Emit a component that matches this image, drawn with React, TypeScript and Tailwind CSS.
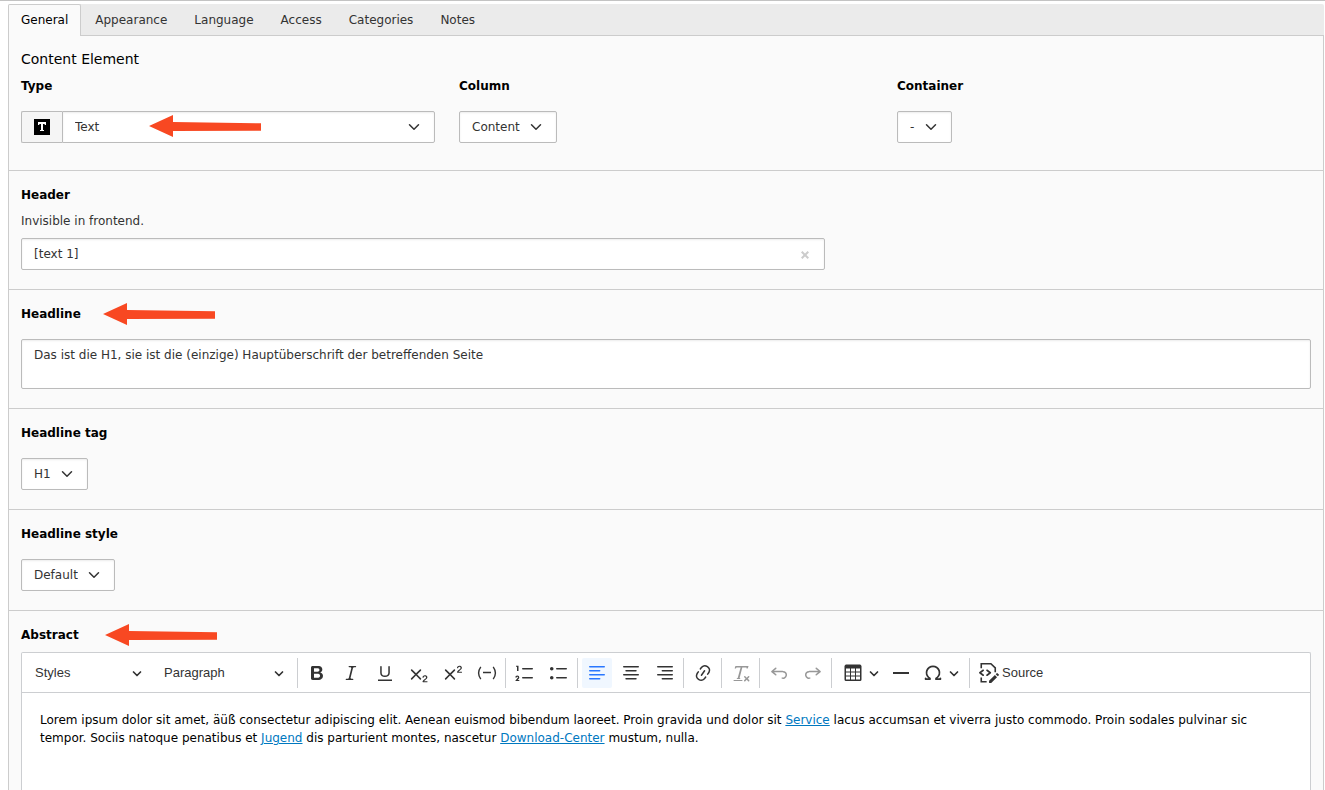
import { useState } from "react";
import type { ReactNode } from "react";
import clsx from "clsx";

const TABS = [
  "General",
  "Appearance",
  "Language",
  "Access",
  "Categories",
  "Notes",
];

const CROSS_PATH =
  "m7.03 10.349 3.818-3.819a.8.8 0 1 1 1.132 1.132L8.16 11.48l3.819 3.818a.8.8 0 1 1-1.132 1.132L7.03 12.61l-3.818 3.82a.8.8 0 1 1-1.132-1.132L5.9 11.48 2.08 7.662A.8.8 0 1 1 3.212 6.53l3.818 3.82z";

const SMALL_TWO_PATH =
  "h2.549c.254 0 .447.05.58.152a.49.49 0 0 1 .201.413.54.54 0 0 1-.159.393c-.105.108-.266.162-.48.162h-3.594c-.245 0-.435-.066-.572-.197a.621.621 0 0 1-.205-.463c0-.114.044-.265.132-.453a1.62 1.62 0 0 1 .288-.444c.433-.436.824-.81 1.172-1.122.348-.312.597-.517.747-.615.267-.183.49-.368.667-.553.177-.185.312-.375.405-.57.093-.194.139-.384.139-.57a1.008 1.008 0 0 0-.554-.917 1.197 1.197 0 0 0-.56-.133c-.426 0-.761.182-1.005.546a2.332 2.332 0 0 0-.164.39 1.609 1.609 0 0 1-.258.488c-.096.114-.237.17-.423.17a.558.558 0 0 1-.405-.156.568.568 0 0 1-.161-.427c0-.218.05-.446.151-.683.101-.238.252-.453.452-.646s.454-.349.762-.467a2.998 2.998 0 0 1 1.081-.178c.498 0 .923.076 1.274.228a1.916 1.916 0 0 1 1.004 1.032 1.984 1.984 0 0 1-.156 1.794c-.2.32-.405.572-.613.754-.208.182-.558.468-1.048.857-.49.39-.826.691-1.008.906a2.703 2.703 0 0 0-.24.309z";

const UNDO_PATH =
  "m5.042 9.367 2.189 1.837a.75.75 0 0 1-.965 1.149l-3.788-3.18a.747.747 0 0 1-.21-.284.75.75 0 0 1 .17-.945L6.23 4.762a.75.75 0 1 1 .964 1.15L4.863 7.866h8.917A.75.75 0 0 1 14 7.9a4 4 0 1 1-1.477 7.718l.344-1.489a2.5 2.5 0 1 0 1.094-4.73l.008-.032H5.042z";

const ICONS: Record<string, ReactNode> = {
  bold: (
    <path d="M10.187 17H5.773c-.637 0-1.092-.138-1.364-.415-.273-.277-.409-.718-.409-1.323V4.738c0-.617.14-1.062.419-1.332.279-.27.73-.406 1.354-.406h4.68c.69 0 1.288.041 1.793.124.506.083.96.242 1.36.478.341.197.644.447.906.75a3.262 3.262 0 0 1 .808 2.162c0 1.401-.722 2.426-2.167 3.075C15.05 10.175 16 11.315 16 13.01a3.756 3.756 0 0 1-2.296 3.504 6.1 6.1 0 0 1-1.517.377c-.571.073-1.238.11-2 .11zm-.217-6.217H7v4.087h3.069c1.977 0 2.965-.69 2.965-2.072 0-.707-.256-1.22-.768-1.537-.512-.319-1.277-.478-2.296-.478zM7 5.13v3.619h2.606c.729 0 1.292-.067 1.69-.2a1.6 1.6 0 0 0 .91-.765c.165-.267.247-.566.247-.897 0-.707-.26-1.176-.778-1.409-.519-.232-1.31-.348-2.375-.348H7z" />
  ),
  italic: (
    <path d="m9.586 14.633.021.004c-.036.335.095.655.393.962.082.083.173.15.274.201h1.474a.6.6 0 1 1 0 1.2H5.304a.6.6 0 0 1 0-1.2h1.15c.474-.07.809-.182 1.005-.334.157-.122.291-.32.404-.597l2.416-9.55a1.053 1.053 0 0 0-.281-.823 1.12 1.12 0 0 0-.442-.296H8.15a.6.6 0 0 1 0-1.2h6.443a.6.6 0 1 1 0 1.2h-1.195c-.376.056-.65.155-.823.296-.215.175-.423.439-.623.79l-2.366 9.347z" />
  ),
  underline: (
    <path d="M3 18v-1.5h14V18zm2.2-8V3.6c0-.4.4-.6.8-.6.3 0 .7.2.7.6v6.2c0 2 1.3 2.8 3.2 2.8 1.9 0 3.4-.9 3.4-2.9V3.6c0-.3.4-.5.8-.5.3 0 .7.2.7.5V10c0 2.7-2.2 4-4.9 4-2.6 0-4.7-1.2-4.7-4z" />
  ),
  subscript: <path d={`${CROSS_PATH}M15.177 18.178${SMALL_TWO_PATH}`} />,
  superscript: <path d={`${CROSS_PATH}M15.677 8.678${SMALL_TWO_PATH}`} />,
  softHyphen: (
    <path
      fill="none"
      stroke="currentColor"
      strokeWidth="1.4"
      d="M3.8 3.8Q-.6 10 3.8 16.2M16.2 3.8q4.4 6.2 0 12.4M6 9.5h8"
    />
  ),
  numberedList: (
    <path d="M7 5.75c0 .414.336.75.75.75h9.5a.75.75 0 1 0 0-1.5h-9.5a.75.75 0 0 0-.75.75zM3.5 3v5H2V3.7H1v-1h2.5V3zM.343 17.857l2.59-3.257H2.92a.6.6 0 1 0-1.04 0H.302a2 2 0 1 1 3.995 0h-.001c-.048.405-.16.734-.333.988-.175.254-.59.692-1.244 1.312H4.3v1h-4l.043-.043zM7 14.75a.75.75 0 0 1 .75-.75h9.5a.75.75 0 1 1 0 1.5h-9.5a.75.75 0 0 1-.75-.75z" />
  ),
  bulletedList: (
    <path d="M7 5.75c0 .414.336.75.75.75h9.5a.75.75 0 1 0 0-1.5h-9.5a.75.75 0 0 0-.75.75zm-6 0C1 4.784 1.777 4 2.75 4c.966 0 1.75.777 1.75 1.75 0 .966-.777 1.75-1.75 1.75C1.784 7.5 1 6.723 1 5.75zm6 9c0 .414.336.75.75.75h9.5a.75.75 0 1 0 0-1.5h-9.5a.75.75 0 0 0-.75.75zm-6 0c0-.966.777-1.75 1.75-1.75.966 0 1.75.777 1.75 1.75 0 .966-.777 1.75-1.75 1.75-.966 0-1.75-.777-1.75-1.75z" />
  ),
  alignLeft: (
    <path
      stroke="currentColor"
      strokeWidth="1.5"
      strokeLinecap="round"
      d="M2.75 3.75h14.5M2.75 7.75h9.93M2.75 11.75h14.5M2.75 15.75h9.93"
    />
  ),
  alignCenter: (
    <path
      stroke="currentColor"
      strokeWidth="1.5"
      strokeLinecap="round"
      d="M2.75 3.75h14.5M5.04 7.75h9.93M2.75 11.75h14.5M5.04 15.75h9.93"
    />
  ),
  alignRight: (
    <path
      stroke="currentColor"
      strokeWidth="1.5"
      strokeLinecap="round"
      d="M2.75 3.75h14.5M7.32 7.75h9.93M2.75 11.75h14.5M7.32 15.75h9.93"
    />
  ),
  link: (
    <path d="m11.077 15 .991-1.416a.75.75 0 1 1 1.229.86l-1.148 1.64a.748.748 0 0 1-.217.206 5.251 5.251 0 0 1-8.503-5.955.741.741 0 0 1 .12-.274l1.147-1.639a.75.75 0 1 1 1.228.86L4.933 10.7l.006.003a3.75 3.75 0 0 0 6.132 4.294l.006.004zm5.494-5.335a.748.748 0 0 1-.12.274l-1.147 1.639a.75.75 0 1 1-1.228-.86l.86-1.23a3.75 3.75 0 0 0-6.144-4.301l-.86 1.229a.75.75 0 0 1-1.229-.86l1.148-1.64a.748.748 0 0 1 .217-.206 5.251 5.251 0 0 1 8.503 5.955zm-4.563-2.532a.75.75 0 0 1 .184 1.045l-3.155 4.505a.75.75 0 1 1-1.229-.86l3.155-4.506a.75.75 0 0 1 1.045-.184z" />
  ),
  removeFormat: (
    <path d="M8.69 14.915c.053.052.173.083.36.093a.366.366 0 0 1 .345.485l-.003.01a.738.738 0 0 1-.697.497h-2.67a.374.374 0 0 1-.353-.496l.013-.038a.681.681 0 0 1 .644-.458c.197-.012.325-.043.386-.093a.28.28 0 0 0 .072-.11L9.592 4.5H6.269c-.359-.017-.609.013-.75.09-.142.078-.289.265-.442.563-.192.29-.516.464-.864.464H4.17a.43.43 0 0 1-.407-.569L4.46 3h13.08l-.62 2.043a.81.81 0 0 1-.775.574h-.114a.486.486 0 0 1-.486-.486c.001-.284-.054-.464-.167-.54-.112-.076-.367-.106-.766-.091h-3.28l-2.68 10.257c-.006.074.007.127.038.158zM3 17h8a.5.5 0 1 1 0 1H3a.5.5 0 1 1 0-1zm11.299 1.17a.75.75 0 1 1-1.06-1.06l1.414-1.415-1.415-1.414a.75.75 0 0 1 1.06-1.06l1.415 1.414 1.414-1.415a.75.75 0 1 1 1.06 1.06l-1.413 1.415 1.414 1.415a.75.75 0 0 1-1.06 1.06l-1.415-1.414-1.414 1.414z" />
  ),
  undo: <path d={UNDO_PATH} />,
  redo: <path transform="translate(20 0) scale(-1 1)" d={UNDO_PATH} />,
  table: (
    <path d="M3 5.5v3h4v-3H3Zm0 4v3h4v-3H3Zm0 4v3h4v-3H3Zm5 3h4v-3H8v3Zm5 0h4v-3h-4v3Zm4-4v-3h-4v3h4Zm0-4v-3h-4v3h4Zm1.5 8A1.5 1.5 0 0 1 17 18H3a1.5 1.5 0 0 1-1.5-1.5V3c.222-.863 1.068-1.5 2-1.5h13c.932 0 1.778.637 2 1.5v13.5Zm-6.5-4v-3H8v3h4Zm0-4v-3H8v3h4Z" />
  ),
  horizontalLine: <path d="M2 9h16v2H2z" />,
  specialCharacters: (
    <path d="M10 2.5a7.47 7.47 0 0 1 4.231 1.31 7.268 7.268 0 0 1 2.703 3.454 7.128 7.128 0 0 1 .199 4.353c-.39 1.436-1.475 2.72-2.633 3.677h2.013c0-.226.092-.443.254-.603a.876.876 0 0 1 1.229 0c.163.16.254.377.254.603v.853c0 .209-.078.41-.22.567a.873.873 0 0 1-.547.28l-.101.006h-4.695a.517.517 0 0 1-.516-.518v-1.265c0-.21.128-.398.317-.489a5.601 5.601 0 0 0 2.492-2.371 5.459 5.459 0 0 0 .552-3.693 5.53 5.53 0 0 0-1.955-3.2A5.71 5.71 0 0 0 10 4.206 5.708 5.708 0 0 0 6.419 5.46 5.527 5.527 0 0 0 4.46 8.663a5.457 5.457 0 0 0 .554 3.695 5.6 5.6 0 0 0 2.497 2.37.55.55 0 0 1 .317.49v1.264c0 .286-.23.518-.516.518H2.618a.877.877 0 0 1-.614-.25.845.845 0 0 1-.254-.603v-.853c0-.226.091-.443.254-.603a.876.876 0 0 1 1.228 0c.163.16.255.377.255.603h1.925c-1.158-.958-2.155-2.241-2.545-3.678a7.128 7.128 0 0 1 .199-4.352 7.268 7.268 0 0 1 2.703-3.455A7.475 7.475 0 0 1 10 2.5z" />
  ),
  source: (
    <>
      <path
        fill="none"
        stroke="currentColor"
        strokeWidth="1.6"
        d="M2.25 5.2V.75h9.6l4.4 4.1v4.4M2.25 14.4v4.35h5.4"
      />
      <path
        fill="none"
        stroke="currentColor"
        strokeWidth="1.6"
        strokeLinecap="round"
        strokeLinejoin="round"
        d="M4.2 7.25.9 9.75l3.3 2.5M8 7.25l3.3 2.5-3.3 2.5"
      />
      <path d="m15.898 12.024 2.122 2.122-5.825 5.809-2.125-.005.003-2.116zm2.539-1.847 1.414 1.414a.5.5 0 0 1 0 .707l-1.06 1.06-2.122-2.12 1.061-1.061a.5.5 0 0 1 .707 0z" />
    </>
  ),
};

function Icon({ name }: { name: string }) {
  return (
    <svg
      viewBox="0 0 20 20"
      className="size-5 shrink-0 fill-current"
      aria-hidden="true"
    >
      {ICONS[name]}
    </svg>
  );
}

function ToolbarArrow() {
  return (
    <svg
      viewBox="0 0 10 10"
      className="size-2.5 shrink-0 fill-none stroke-current"
      aria-hidden="true"
    >
      <path
        strokeWidth="1.7"
        strokeLinecap="round"
        strokeLinejoin="round"
        d="m1.5 4 3.5 3.5L8.5 4"
      />
    </svg>
  );
}

function PointerArrow({ className }: { className?: string }) {
  return (
    <svg
      viewBox="0 0 112 22"
      className={clsx("h-[22px] w-28 shrink-0 fill-[#f84822]", className)}
      aria-hidden="true"
    >
      <path d="M0 11 24 0v7l88 1.3v7.4L24 16v6z" />
    </svg>
  );
}

interface SelectFieldProps {
  id: string;
  value: string;
  className?: string;
  selectClassName?: string;
  children?: ReactNode;
}

function SelectField({
  id,
  value,
  className,
  selectClassName,
  children,
}: SelectFieldProps) {
  return (
    <div className={clsx("relative flex", className)}>
      <select
        id={id}
        className={clsx(
          "h-8 appearance-none border border-[#bbb] bg-white pr-9 pl-3 text-[#333] shadow-[inset_0_1px_2px_rgba(0,0,0,0.075)]",
          selectClassName ?? "rounded-xs",
        )}
      >
        <option>{value}</option>
      </select>
      <svg
        viewBox="0 0 16 16"
        className="pointer-events-none absolute top-[10px] right-[15px] size-3 fill-none stroke-[#333] stroke-2"
        aria-hidden="true"
      >
        <path strokeLinecap="round" strokeLinejoin="round" d="m2 5 6 6 6-6" />
      </svg>
      {children}
    </div>
  );
}

function FieldLabel({
  htmlFor,
  children,
}: {
  htmlFor: string;
  children: ReactNode;
}) {
  return (
    <label htmlFor={htmlFor} className="block font-bold text-black">
      {children}
    </label>
  );
}

function Section({ children }: { children: ReactNode }) {
  return (
    <section className="border-t border-[#ccc] px-3 pt-[15px] pb-[19px]">
      {children}
    </section>
  );
}

function Separator() {
  return <span className="mr-1 ml-[3px] h-[30px] w-px shrink-0 bg-[#ccced1]" />;
}

interface ToolButtonProps {
  icon: string;
  label: string;
  active?: boolean;
  disabled?: boolean;
}

function ToolButton({ icon, label, active, disabled }: ToolButtonProps) {
  return (
    <button
      type="button"
      aria-label={label}
      aria-pressed={active}
      disabled={disabled}
      className={clsx(
        "flex size-[30px] shrink-0 items-center justify-center rounded-xs",
        active && "bg-[#f0f7ff] text-[#2977ff]",
        disabled && "opacity-50",
      )}
    >
      <Icon name={icon} />
    </button>
  );
}

function ToolDropdown({ icon, label }: { icon: string; label: string }) {
  return (
    <button
      type="button"
      aria-label={label}
      aria-haspopup="true"
      className="flex h-[30px] w-[50px] shrink-0 items-center justify-center gap-1.5"
    >
      <Icon name={icon} />
      <ToolbarArrow />
    </button>
  );
}

function ToolGroup({ children }: { children: ReactNode }) {
  return <div className="flex gap-1">{children}</div>;
}

function EditorToolbar() {
  return (
    <div
      role="toolbar"
      aria-label="Editor toolbar"
      className="flex h-10 items-center border-b border-[#ccced1] pl-[3px] font-['Liberation_Sans',Arial,sans-serif] text-[13px] text-[#333]"
    >
      <button
        type="button"
        aria-haspopup="true"
        className="mr-0.5 flex h-[30px] w-[127px] items-center justify-between px-2.5"
      >
        Styles
        <ToolbarArrow />
      </button>
      <button
        type="button"
        aria-haspopup="true"
        className="flex h-[30px] w-[140px] items-center justify-between px-2.5"
      >
        Paragraph
        <ToolbarArrow />
      </button>
      <Separator />
      <ToolGroup>
        <ToolButton icon="bold" label="Bold" />
        <ToolButton icon="italic" label="Italic" />
        <ToolButton icon="underline" label="Underline" />
        <ToolButton icon="subscript" label="Subscript" />
        <ToolButton icon="superscript" label="Superscript" />
        <ToolButton icon="softHyphen" label="Insert soft hyphen" />
      </ToolGroup>
      <Separator />
      <ToolGroup>
        <ToolButton icon="numberedList" label="Numbered List" />
        <ToolButton icon="bulletedList" label="Bulleted List" />
      </ToolGroup>
      <Separator />
      <ToolGroup>
        <ToolButton icon="alignLeft" label="Align left" active />
        <ToolButton icon="alignCenter" label="Align center" />
        <ToolButton icon="alignRight" label="Align right" />
      </ToolGroup>
      <Separator />
      <ToolButton icon="link" label="Link" />
      <Separator />
      <ToolButton icon="removeFormat" label="Remove Format" disabled />
      <Separator />
      <ToolGroup>
        <ToolButton icon="undo" label="Undo" disabled />
        <ToolButton icon="redo" label="Redo" disabled />
      </ToolGroup>
      <Separator />
      <div className="flex">
        <ToolDropdown icon="table" label="Insert table" />
        <ToolButton icon="horizontalLine" label="Horizontal line" />
        <ToolDropdown icon="specialCharacters" label="Special characters" />
      </div>
      <Separator />
      <button
        type="button"
        className="flex h-[30px] items-center gap-[3px] px-[5px]"
      >
        <Icon name="source" />
        Source
      </button>
    </div>
  );
}

function EditorLink({ children }: { children: ReactNode }) {
  return (
    <a href="#" className="text-[#0078bf] underline">
      {children}
    </a>
  );
}

export default function App() {
  const [activeTab, setActiveTab] = useState("General");
  const [header, setHeader] = useState("[text 1]");

  return (
    <div className="flex min-h-screen flex-col border-t border-[#c3c3c3] bg-white pt-[3px] pr-px pl-2 font-['DejaVu_Sans',Verdana,sans-serif] text-xs leading-[18px] text-[#333]">
      <div role="tablist" className="flex gap-px rounded-t-xs bg-[#ebebeb]">
        {TABS.map((tab) => (
          <button
            key={tab}
            type="button"
            role="tab"
            aria-selected={tab === activeTab}
            onClick={() => setActiveTab(tab)}
            className={clsx(
              "-mb-px h-8 border border-b-0 px-3 pb-0.5",
              tab === activeTab
                ? "z-10 rounded-t-xs border-[#ccc] bg-[#fafafa] text-black"
                : "border-transparent",
            )}
          >
            {tab}
          </button>
        ))}
      </div>

      <main className="flex flex-1 flex-col border-x border-t border-[#ccc] bg-[#fafafa]">
        <section className="px-3 pt-[13px] pb-[27px]">
          <h2 className="mb-2 text-sm text-black">Content Element</h2>
          <div className="grid grid-cols-3 gap-6">
            <div>
              <FieldLabel htmlFor="type">Type</FieldLabel>
              <div className="mt-4 flex">
                <span className="flex h-8 items-center rounded-l-xs border border-r-0 border-[#bbb] bg-[#f5f5f5] px-3">
                  <svg viewBox="0 0 16 16" className="size-4" aria-hidden="true">
                    <path d="M0 0h16v16H0z" />
                    <path
                      className="fill-white"
                      d="M4 3h8v3h-1l-.6-1H9v6h1v1H6v-1h1V5H5.6L5 6H4z"
                    />
                  </svg>
                </span>
                <SelectField
                  id="type"
                  value="Text"
                  className="flex-1"
                  selectClassName="w-full rounded-r-xs"
                >
                  <PointerArrow className="pointer-events-none absolute top-1 left-[87px]" />
                </SelectField>
              </div>
            </div>
            <div>
              <FieldLabel htmlFor="column">Column</FieldLabel>
              <SelectField
                id="column"
                value="Content"
                className="mt-4 w-fit"
              />
            </div>
            <div>
              <FieldLabel htmlFor="container">Container</FieldLabel>
              <SelectField id="container" value="-" className="mt-4 w-fit" />
            </div>
          </div>
        </section>

        <Section>
          <FieldLabel htmlFor="header">Header</FieldLabel>
          <p className="my-2">Invisible in frontend.</p>
          <div className="relative max-w-[804px]">
            <input
              id="header"
              type="text"
              value={header}
              onChange={(event) => setHeader(event.target.value)}
              className="block h-8 w-full rounded-xs border border-[#bbb] bg-white pr-9 pl-3 shadow-[inset_0_1px_2px_rgba(0,0,0,0.075)]"
            />
            <button
              type="button"
              aria-label="Clear input"
              onClick={() => setHeader("")}
              className="absolute top-[9px] right-3 flex size-4 items-center justify-center"
            >
              <svg
                viewBox="0 0 8 8"
                className="size-2 fill-none stroke-[#ccc] stroke-2"
                aria-hidden="true"
              >
                <path d="m.7.7 6.6 6.6M7.3.7.7 7.3" />
              </svg>
            </button>
          </div>
        </Section>

        <Section>
          <div className="flex h-[18px] items-center gap-[22px]">
            <FieldLabel htmlFor="headline">Headline</FieldLabel>
            <PointerArrow />
          </div>
          <textarea
            id="headline"
            rows={2}
            defaultValue="Das ist die H1, sie ist die (einzige) Hauptüberschrift der betreffenden Seite"
            className="mt-4 block h-[50px] w-full resize-none rounded-xs border border-[#bbb] bg-white px-3 py-1.5 shadow-[inset_0_1px_2px_rgba(0,0,0,0.075)]"
          />
        </Section>

        <Section>
          <FieldLabel htmlFor="headline-tag">Headline tag</FieldLabel>
          <SelectField id="headline-tag" value="H1" className="mt-4 w-fit" />
        </Section>

        <Section>
          <FieldLabel htmlFor="headline-style">Headline style</FieldLabel>
          <SelectField
            id="headline-style"
            value="Default"
            className="mt-4 w-fit"
          />
        </Section>

        <section className="flex flex-1 flex-col border-t border-[#ccc] px-3 pt-[15px]">
          <div className="mb-2 flex h-[18px] items-center gap-[26px]">
            <span id="abstract-label" className="font-bold text-black">
              Abstract
            </span>
            <PointerArrow />
          </div>
          <div className="flex-1 rounded-t-xs border border-b-0 border-[#ccced1] bg-white">
            <EditorToolbar />
            <div
              role="textbox"
              aria-multiline="true"
              aria-labelledby="abstract-label"
              contentEditable
              suppressContentEditableWarning
              spellCheck={false}
              className="p-[18px] text-black outline-none"
            >
              <p>
                Lorem ipsum dolor sit amet, äüß consectetur adipiscing elit.
                Aenean euismod bibendum laoreet. Proin gravida und dolor sit{" "}
                <EditorLink>Service</EditorLink> lacus accumsan et viverra justo
                commodo. Proin sodales pulvinar sic tempor. Sociis natoque
                penatibus et <EditorLink>Jugend</EditorLink> dis parturient
                montes, nascetur <EditorLink>Download-Center</EditorLink>{" "}
                mustum, nulla.
              </p>
            </div>
          </div>
        </section>
      </main>
    </div>
  );
}
